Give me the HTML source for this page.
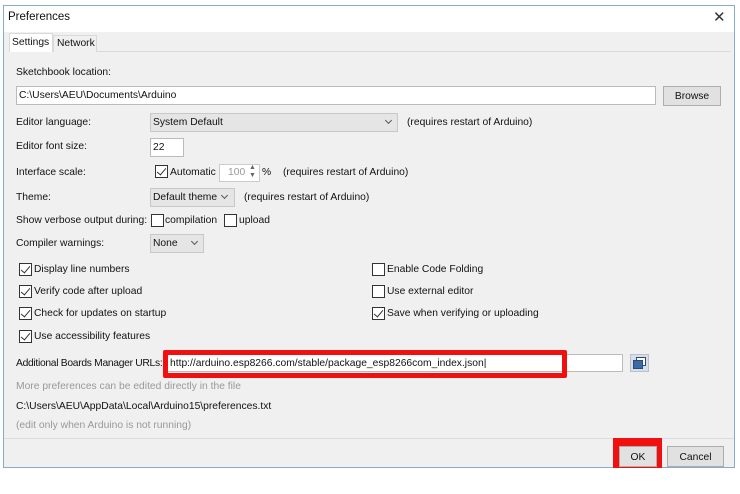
<!DOCTYPE html>
<html><head><style>
*{margin:0;padding:0;box-sizing:border-box}
body{width:740px;height:494px;background:#fff;position:relative;overflow:hidden;font-family:"Liberation Sans",sans-serif;font-size:10.3px;color:#111}
.a{position:absolute;white-space:nowrap}
.win{position:absolute;left:3px;top:5px;width:732px;height:463px;border:1px solid #8aa9d0;background:#f0f0f0}
.inp{position:absolute;background:#fff;border:1px solid #bbb}
.btn{position:absolute;background:#e1e1e1;border:1px solid #adadad;text-align:center}
.sel{position:absolute;background:#e5e5e5;border:1px solid #c8c8c8}
.cb{position:absolute;width:13px;height:13px;border:1px solid #333;background:#fff}
.cb.on::after{content:"";position:absolute;left:3px;top:0px;width:4px;height:8px;border:solid #333;border-width:0 1.5px 1.5px 0;transform:rotate(40deg)}
.chev{position:absolute;width:5px;height:5px;border:solid #555;border-width:0 1px 1px 0;transform:rotate(45deg)}
.g{color:#999}
</style></head><body>
<div class="win"></div>
<div class="a" style="left:4px;top:6px;width:730px;height:26px;background:#fff"></div>
<div class="a" style="left:8px;top:11px;font-size:11.5px">Preferences</div>
<div class="a" style="left:713px;top:8px;font-size:15px;color:#333">✕</div>
<div class="a" style="left:52px;top:51px;width:679px;height:1px;background:#d9d9d9"></div>
<div class="a" style="left:9px;top:33px;width:44px;height:19px;background:#fff;border:1px solid #d9d9d9;border-bottom:none"></div>
<div class="a" style="left:12px;top:37px">Settings</div>
<div class="a" style="left:53px;top:35px;width:44px;height:17px;background:#f0f0f0;border:1px solid #d9d9d9;border-bottom:none"></div>
<div class="a" style="left:57px;top:38px">Network</div>

<div class="a" style="left:16px;top:67px">Sketchbook location:</div>
<div class="inp" style="left:16px;top:86px;width:640px;height:19px"></div>
<div class="a" style="left:19px;top:90px">C:\Users\AEU\Documents\Arduino</div>
<div class="btn" style="left:663px;top:86px;width:58px;height:20px;padding-top:4px">Browse</div>

<div class="a" style="left:16px;top:117px">Editor language:</div>
<div class="sel" style="left:150px;top:113px;width:248px;height:19px"></div>
<div class="a" style="left:153px;top:117px">System Default</div>
<div class="chev" style="left:386px;top:118px"></div>
<div class="a" style="left:407px;top:117px">(requires restart of Arduino)</div>

<div class="a" style="left:16px;top:141px">Editor font size:</div>
<div class="inp" style="left:150px;top:138px;width:34px;height:19px"></div>
<div class="a" style="left:153px;top:142px">22</div>

<div class="a" style="left:16px;top:167px">Interface scale:</div>
<div class="cb on" style="left:155px;top:165px"></div>
<div class="a" style="left:170px;top:167px">Automatic</div>
<div class="inp" style="left:219px;top:164px;width:41px;height:18px;border-color:#ccc"></div>
<div class="a g" style="left:228px;top:167px">100</div>
<div class="a" style="left:249px;top:164px;font-size:7px;color:#666;line-height:8px">▲<br>▼</div>
<div class="a" style="left:262px;top:167px">%</div>
<div class="a" style="left:283px;top:167px">(requires restart of Arduino)</div>

<div class="a" style="left:16px;top:192px">Theme:</div>
<div class="sel" style="left:150px;top:188px;width:85px;height:19px"></div>
<div class="a" style="left:153px;top:192px">Default theme</div>
<div class="chev" style="left:222px;top:193px"></div>
<div class="a" style="left:244px;top:192px">(requires restart of Arduino)</div>

<div class="a" style="left:16px;top:215px">Show verbose output during:</div>
<div class="cb" style="left:151px;top:214px"></div>
<div class="a" style="left:165px;top:215px">compilation</div>
<div class="cb" style="left:224px;top:214px"></div>
<div class="a" style="left:239px;top:215px">upload</div>

<div class="a" style="left:16px;top:238px">Compiler warnings:</div>
<div class="sel" style="left:150px;top:234px;width:54px;height:19px"></div>
<div class="a" style="left:153px;top:238px">None</div>
<div class="chev" style="left:192px;top:239px"></div>

<div class="cb on" style="left:19px;top:263px"></div><div class="a" style="left:34px;top:264px">Display line numbers</div>
<div class="cb on" style="left:19px;top:285px"></div><div class="a" style="left:34px;top:286px">Verify code after upload</div>
<div class="cb on" style="left:19px;top:307px"></div><div class="a" style="left:34px;top:308px">Check for updates on startup</div>
<div class="cb on" style="left:19px;top:330px"></div><div class="a" style="left:34px;top:331px">Use accessibility features</div>
<div class="cb" style="left:372px;top:263px"></div><div class="a" style="left:387px;top:264px">Enable Code Folding</div>
<div class="cb" style="left:372px;top:285px"></div><div class="a" style="left:387px;top:286px">Use external editor</div>
<div class="cb on" style="left:372px;top:307px"></div><div class="a" style="left:387px;top:308px">Save when verifying or uploading</div>

<div class="a" style="left:16px;top:358px;letter-spacing:-0.3px">Additional Boards Manager URLs:</div>
<div class="inp" style="left:165px;top:354px;width:458px;height:18px"></div>
<div class="a" style="left:163px;top:350px;width:404px;height:28px;border:5px solid #f01010;border-radius:2px"></div>
<div class="a" style="left:170px;top:358px">http://arduino.esp8266.com/stable/package_esp8266com_index.json|</div>
<div class="a" style="left:630px;top:354px;width:19px;height:18px;background:#d8dde6;border:1px solid #b8c0cc"></div>
<div class="a" style="left:636px;top:357px;width:10px;height:9px;background:#fff;border:1px solid #2a4a7a"></div>
<div class="a" style="left:633px;top:360px;width:10px;height:9px;background:#3a6aa8;border:1px solid #2a4a7a"></div>

<div class="a g" style="left:16px;top:381px">More preferences can be edited directly in the file</div>
<div class="a" style="left:16px;top:401px">C:\Users\AEU\AppData\Local\Arduino15\preferences.txt</div>
<div class="a g" style="left:16px;top:420px">(edit only when Arduino is not running)</div>

<div class="a" style="left:4px;top:438px;width:730px;height:1px;background:#dcdcdc"></div>
<div class="a" style="left:613px;top:438px;width:49px;height:30px;background:#f01010"></div>
<div class="btn" style="left:619px;top:446px;width:38px;height:21px;padding-top:5px">OK</div>
<div class="btn" style="left:667px;top:446px;width:57px;height:21px;padding-top:5px">Cancel</div>
</body></html>
